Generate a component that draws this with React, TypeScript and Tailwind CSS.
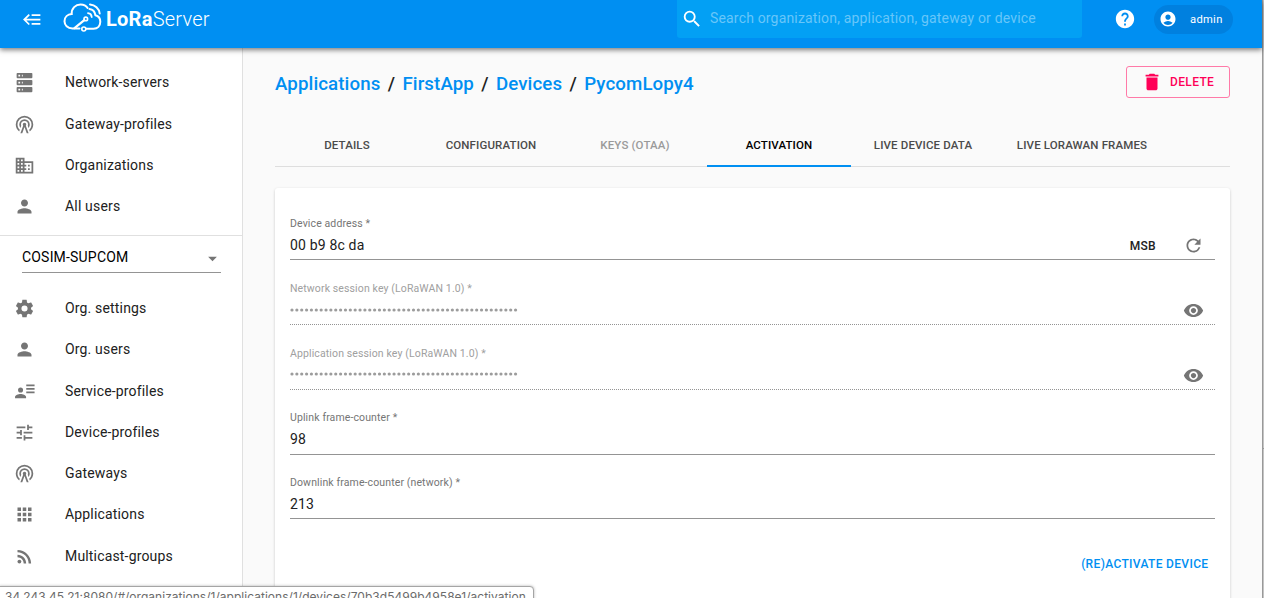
import type { ReactNode } from "react";
import {
  MdAccountCircle,
  MdApps,
  MdArrowDropDown,
  MdDelete,
  MdDomain,
  MdHelp,
  MdPerson,
  MdRefresh,
  MdRssFeed,
  MdSearch,
  MdTune,
  MdVisibility,
} from "react-icons/md";

const paths = {
  back: "M5,13L9,17L7.6,18.42L1.18,12L7.6,5.58L9,7L5,11H21V13H5M21,6V8H11V6H21M21,16V18H11V16H21Z",
  server:
    "M4,1H20A1,1 0 0,1 21,2V6A1,1 0 0,1 20,7H4A1,1 0 0,1 3,6V2A1,1 0 0,1 4,1M4,9H20A1,1 0 0,1 21,10V14A1,1 0 0,1 20,15H4A1,1 0 0,1 3,14V10A1,1 0 0,1 4,9M4,17H20A1,1 0 0,1 21,18V22A1,1 0 0,1 20,23H4A1,1 0 0,1 3,22V18A1,1 0 0,1 4,17M9,5H10V3H9V5M9,13H10V11H9V13M9,21H10V19H9V21M5,3V5H7V3H5M5,11V13H7V11H5M5,19V21H7V19H5Z",
  tower:
    "M12,10A2,2 0 0,1 14,12C14,12.5 13.82,12.94 13.53,13.29L16.7,22H14.57L12,14.93L9.43,22H7.3L10.47,13.29C10.18,12.94 10,12.5 10,12A2,2 0 0,1 12,10M12,8A4,4 0 0,0 8,12C8,12.5 8.1,13 8.28,13.46L7.4,15.86C6.53,14.81 6,13.47 6,12A6,6 0 0,1 12,6A6,6 0 0,1 18,12C18,13.47 17.47,14.81 16.6,15.86L15.72,13.46C15.9,13 16,12.5 16,12A4,4 0 0,0 12,8M12,4A8,8 0 0,0 4,12C4,14.36 5,16.5 6.64,17.94L5.92,19.94C3.54,18.11 2,15.23 2,12A10,10 0 0,1 12,2A10,10 0 0,1 22,12C22,15.23 20.46,18.11 18.08,19.94L17.36,17.94C19,16.5 20,14.36 20,12A8,8 0 0,0 12,4Z",
  cog: "M12,15.5A3.5,3.5 0 0,1 8.5,12A3.5,3.5 0 0,1 12,8.5A3.5,3.5 0 0,1 15.5,12A3.5,3.5 0 0,1 12,15.5M19.43,12.97C19.47,12.65 19.5,12.33 19.5,12C19.5,11.67 19.47,11.34 19.43,11L21.54,9.37C21.73,9.22 21.78,8.95 21.66,8.73L19.66,5.27C19.54,5.05 19.27,4.96 19.05,5.05L16.56,6.05C16.04,5.66 15.5,5.32 14.87,5.07L14.5,2.42C14.46,2.18 14.25,2 14,2H10C9.75,2 9.54,2.18 9.5,2.42L9.13,5.07C8.5,5.32 7.96,5.66 7.44,6.05L4.95,5.05C4.73,4.96 4.46,5.05 4.34,5.27L2.34,8.73C2.21,8.95 2.27,9.22 2.46,9.37L4.57,11C4.53,11.34 4.5,11.67 4.5,12C4.5,12.33 4.53,12.65 4.57,12.97L2.46,14.63C2.27,14.78 2.21,15.05 2.34,15.27L4.34,18.73C4.46,18.95 4.73,19.03 4.95,18.95L7.44,17.94C7.96,18.34 8.5,18.68 9.13,18.93L9.5,21.58C9.54,21.82 9.75,22 10,22H14C14.25,22 14.46,21.82 14.5,21.58L14.87,18.93C15.5,18.67 16.04,18.34 16.56,17.94L19.05,18.95C19.27,19.03 19.54,18.95 19.66,18.73L21.66,15.27C21.78,15.05 21.73,14.78 21.54,14.63L19.43,12.97Z",
  details:
    "M7.5 7.3a2.9 2.9 0 1 1 0 5.8a2.9 2.9 0 1 1 0-5.8M1.2 19.7V18.2C1.2 16 5.1 14.8 7.5 14.8S13.8 16 13.8 18.2V19.7ZM14 4H23.5V5.9H14ZM14 8H23.5V9.9H14ZM14 12H23.5V13.9H14Z",
};

function Glyph({ d }: { d: string }) {
  return (
    <svg viewBox="0 0 24 24" className="size-[21px]" fill="currentColor">
      <path d={d} />
    </svg>
  );
}

function Logo() {
  return (
    <div className="ml-[19.500px] flex items-center text-white">
      <svg width="39" height="32" viewBox="0 0 39 32" fill="none" stroke="currentColor" strokeWidth="2" strokeLinecap="round" className="-mt-[6px]">
        <path d="M16.500 28.500H9.500C4.500 28.300 1.500 25 1.500 21.300C1.500 17.200 4.600 14.300 8.700 14.100C8.300 8.500 12.600 4.400 17.600 4.400C20.800 4.400 23.200 5.800 24.600 8" />
        <path d="M27 4.400C32 4.800 36.100 8.400 36.700 13.500" />
        <path d="M26.500 9C29.500 9.300 31.800 11.600 32.400 15.200C35.800 16 37.300 18.600 37.300 21.800C37.300 25.700 34.600 28.700 30.500 28.700H23" />
        <path d="M25 13.200C27.300 13.400 28.500 14.900 28.700 17" strokeWidth="1.800" />
        <path d="M11.500 28.200L21.300 20.200" strokeWidth="2.200" />
        <circle cx="22.800" cy="18.900" r="1.800" strokeWidth="1.600" />
        <circle cx="20.800" cy="29" r="2" strokeWidth="1.600" />
      </svg>
      <div className="ml-[4.500px] text-[20px] leading-6 tracking-[0.25px]">
        <span className="font-bold">LoRa</span>
        <span className="font-light">Server</span>
      </div>
    </div>
  );
}

function Header() {
  return (
    <header className="relative z-10 flex h-12 w-[1262px] shrink-0 items-start bg-[#008ff2] shadow-[0_2px_5px_rgba(0,0,0,0.5)]">
      <div className="flex h-[38px] w-full items-center">
        <div className="ml-[22px] text-white"><Glyph d={paths.back} /></div>
        <Logo />
        <div className="ml-auto flex h-[38px] w-[405px] items-center rounded-b-[3px] bg-[#03a0f4]">
          <MdSearch className="ml-[4px] size-[22px] text-white" />
          <span className="ml-[7px] pb-[2px] text-[14px] tracking-[0.17px] text-[#68c6f9]">
            Search organization, application, gateway or device
          </span>
        </div>
        <MdHelp className="ml-[32px] size-[22px] text-white" />
        <div className="mr-[29px] ml-[18px] flex h-[29px] w-[79px] items-center rounded-full bg-[#0080df] text-white">
          <MdAccountCircle className="ml-[5px] size-[18px]" />
          <span className="ml-[13px] pt-[2px] text-[11.2px] tracking-[0.3px]">admin</span>
        </div>
      </div>
    </header>
  );
}

function NavItem({ icon, label }: { icon: ReactNode; label: string }) {
  return (
    <li className="flex h-[41.3px] items-center pl-[14px]">
      <span className="flex size-[21px] items-center text-[#757575]">{icon}</span>
      <span className="ml-[30px] text-[14px] tracking-[0.17px] text-[#212121]">{label}</span>
    </li>
  );
}

function Sidebar() {
  return (
    <nav className="w-[243px] shrink-0 overflow-hidden border-r border-[#e0e0e0] bg-white pt-[14.300px]">
      <ul className="border-b border-[#e0e0e0] pb-[7.500px]">
        <NavItem icon={<Glyph d={paths.server} />} label="Network-servers" />
        <NavItem icon={<Glyph d={paths.tower} />} label="Gateway-profiles" />
        <NavItem icon={<MdDomain className="size-[21px]" />} label="Organizations" />
        <NavItem icon={<MdPerson className="size-[21px]" />} label="All users" />
      </ul>
      <div className="mr-[21px] ml-[22px] flex h-[37px] items-center justify-between border-b border-[#949494] pt-[7px]">
        <span className="text-[14px] tracking-[0.19px] text-black">COSIM-SUPCOM</span>
        <MdArrowDropDown className="mt-[3px] -mr-[2px] size-[21px] text-[#757575]" />
      </div>
      <ul className="pt-[14.850px]">
        <NavItem icon={<Glyph d={paths.cog} />} label="Org. settings" />
        <NavItem icon={<MdPerson className="size-[21px]" />} label="Org. users" />
        <NavItem icon={<Glyph d={paths.details} />} label="Service-profiles" />
        <NavItem icon={<MdTune className="size-[21px]" />} label="Device-profiles" />
        <NavItem icon={<Glyph d={paths.tower} />} label="Gateways" />
        <NavItem icon={<MdApps className="size-[21px]" />} label="Applications" />
        <NavItem icon={<MdRssFeed className="size-[21px]" />} label="Multicast-groups" />
      </ul>
    </nav>
  );
}

const crumbs = ["Applications", "FirstApp", "Devices", "PycomLopy4"];

function TitleBar() {
  return (
    <div className="flex h-8 items-center justify-between">
      <h1 className="flex pt-[5px] text-[18.700px] font-medium tracking-[0.1px] text-[#008ff2]">
        {crumbs.map((crumb, i) => (
          <span key={crumb} className="flex">
            {i > 0 && <span className="w-[22px] text-center text-[#212121]">/</span>}
            {crumb}
          </span>
        ))}
      </h1>
      <button className="flex h-8 w-[104px] items-center rounded-[3px] border border-[#ff7aa8] text-[12px] font-medium tracking-[0.35px] text-[#ff0057]">
        <MdDelete className="ml-[14px] size-[22px]" />
        <span className="ml-[7px]">DELETE</span>
      </button>
    </div>
  );
}

function Tab({ label, tone, wide, active }: { label: string; tone: string; wide?: boolean; active?: boolean }) {
  return (
    <div className={`flex h-[42px] items-center justify-center text-[11.500px] font-medium tracking-[0.13px] ${tone} ${wide ? "w-[174px]" : "w-36"} ${active ? "border-b-2 border-[#008ff2] pt-[2px]" : ""}`}>
      {label}
    </div>
  );
}

type FieldProps = {
  label: string;
  value: ReactNode;
  muted?: boolean;
  height: string;
  row?: string;
  children?: ReactNode;
};

function Field({ label, value, muted, height, row = "h-[30px] pt-[2px]", children }: FieldProps) {
  return (
    <div className={`flex flex-col justify-end ${height}`}>
      <div className={`text-[10.500px] leading-[13px] tracking-[0.12px] ${muted ? "text-[#a0a0a0]" : "text-[#757575]"}`}>{label}</div>
      <div className={`flex ${row} items-center border-b ${muted ? "border-dotted border-[#949494] text-[#9c9c9c]" : "border-[#949494] text-[#212121]"}`}>
        <div className="grow text-[14px] tracking-[0.17px]">{value}</div>
        {children}
      </div>
    </div>
  );
}

function HiddenKey({ offset }: { offset: string }) {
  return (
    <svg width="230" height="4" viewBox="0 0 230 4" className={`block ${offset}`} fill="currentColor">
      {Array.from({ length: 47 }, (_, i) => (
        <circle key={i} cx={2 + i * 4.86} cy="2" r="1.6" />
      ))}
    </svg>
  );
}

function Activation() {
  return (
    <section className="mt-[21px] h-[440px] rounded-[3px] bg-white px-[15px] pt-[20px] shadow-[0_1px_3px_rgba(0,0,0,0.2)]">
      <Field label="Device address *" value="00 b9 8c da" height="h-[52px]">
        <span className="text-[12px] font-medium tracking-[0.3px]">MSB</span>
        <MdRefresh className="mr-[11px] ml-[27px] size-[21px] text-[#757575]" />
      </Field>
      <Field label="Network session key (LoRaWAN 1.0) *" value={<HiddenKey offset="-mt-[2px]" />} muted height="h-[65px]">
        <MdVisibility className="mr-[11px] size-[21px] text-[#757575]" />
      </Field>
      <Field label="Application session key (LoRaWAN 1.0) *" value={<HiddenKey offset="-mt-[4px]" />} muted height="h-[65px]">
        <MdVisibility className="mr-[11px] size-[21px] text-[#757575]" />
      </Field>
      <Field label="Uplink frame-counter *" value="98" height="h-[65px]" row="h-[31px] pt-px pb-px" />
      <Field label="Downlink frame-counter (network) *" value="213" height="h-[64px]" />
      <div className="mt-[36px] mr-[6.500px] text-right text-[12px] leading-[18px] font-medium tracking-[0.34px] text-[#008ff2]">
        (RE)ACTIVATE DEVICE
      </div>
    </section>
  );
}

export default function App() {
  return (
    <div className="relative flex h-[598px] w-[1264px] overflow-hidden bg-[#fafafa] font-['Roboto',sans-serif]">
      <div className="flex w-[1262px] shrink-0 flex-col">
        <Header />
        <div className="flex min-h-0 grow">
          <Sidebar />
          <main className="min-w-0 grow overflow-hidden pt-[18px] pr-[32px] pl-[32px]">
            <TitleBar />
            <div className="mt-[27px] flex h-[42px] border-b border-[#dedede]">
              <Tab label="DETAILS" tone="text-[#4b4b4b]" />
              <Tab label="CONFIGURATION" tone="text-[#4b4b4b]" />
              <Tab label="KEYS (OTAA)" tone="text-[#9a9a9a]" />
              <Tab label="ACTIVATION" tone="text-black" active />
              <Tab label="LIVE DEVICE DATA" tone="text-[#4b4b4b]" />
              <Tab label="LIVE LORAWAN FRAMES" tone="text-[#4b4b4b]" wide />
            </div>
            <Activation />
          </main>
        </div>
      </div>
      <div className="flex w-[2px] flex-col border-l border-[#999999] bg-[#c4c4c4]">
        <div className="mt-[448px] h-px bg-[#999999]" />
      </div>
      <div className="absolute -bottom-[6px] -left-px z-20 h-[18px] w-[535px] overflow-hidden rounded-tr-[4px] border border-[#a5a5a5] bg-white pl-[5px] font-['Inter',sans-serif] text-[12px] leading-[19px] tracking-[0.03px] whitespace-nowrap text-[#6b6b6b] shadow-[0_0_3px_rgba(0,0,0,0.3)]">
        34.243.45.21:8080/#/organizations/1/applications/1/devices/70b3d5499b4958e1/activation
      </div>
    </div>
  );
}
